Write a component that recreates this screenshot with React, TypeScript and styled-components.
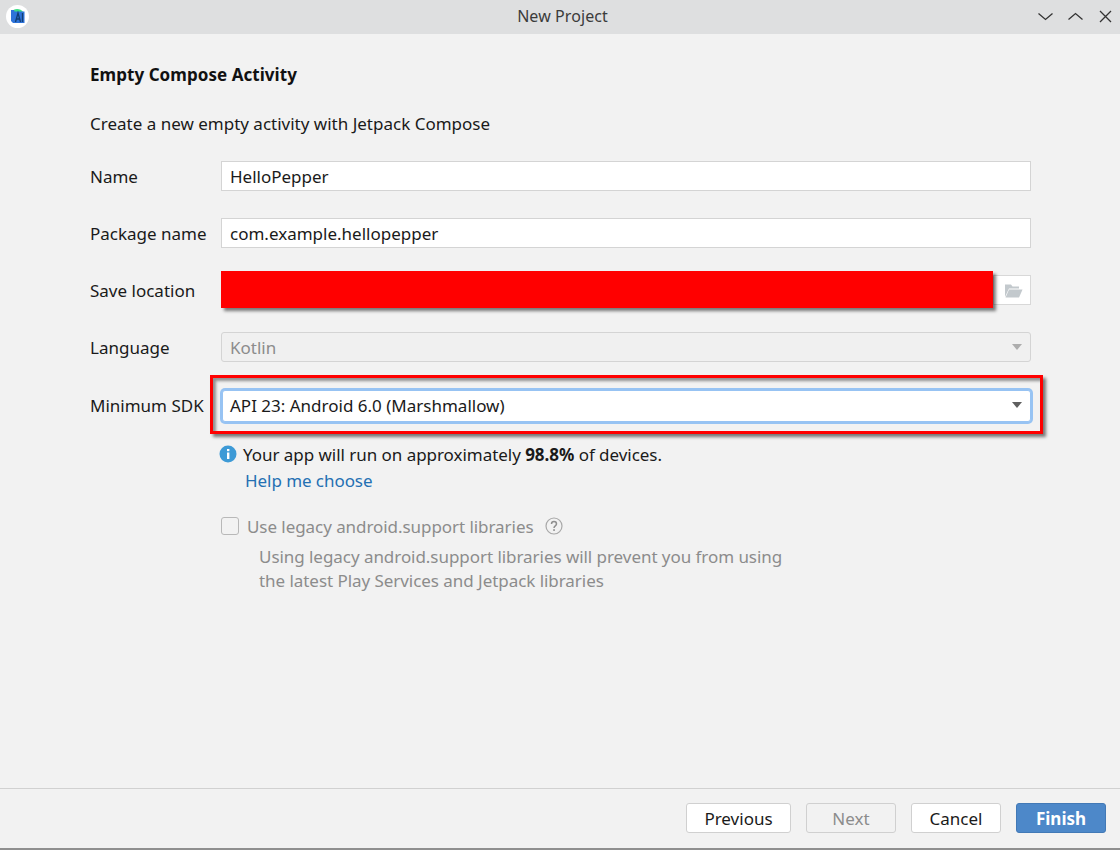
import React from "react";
import styled, { createGlobalStyle } from "styled-components";

const Global = createGlobalStyle`
  html, body { margin: 0; padding: 0; background: #f2f2f2; }
  body { font-family: "Noto Sans", "Open Sans", sans-serif; font-size: 17px; color: #1a1a1a; }
`;
const Window = styled.div`
  width: 1120px; height: 850px; display: flex; flex-direction: column; background: #f2f2f2; overflow: hidden; position: relative;
`;
const TitleBar = styled.header`
  height: 34px; flex: none; background: #dedfe0; display: grid; grid-template-columns: 1fr auto 1fr; align-items: center; padding: 0 7px 0 6px; box-sizing: border-box;
`;
const Logo = styled.div`
  width: 23px; height: 23px; border-radius: 50%; background: #fff; display: flex; align-items: center; justify-content: center; margin-bottom: 2px;
`;
const WindowTitle = styled.div`
  font-size: 16px; letter-spacing: 0.08px; color: #3b3b3b; line-height: 32px; height: 34px; text-align: center; padding-left: 6px;
`;
const WindowControls = styled.div`
  display: flex; justify-content: flex-end; gap: 15px; align-items: center; margin-bottom: 1px;
`;
const Main = styled.main`
  flex: 1; padding: 29px 89px 0 90px; display: flex; flex-direction: column; position: relative;
`;
const Heading = styled.h1`
  margin: 0; font-size: 17px; font-weight: 700; letter-spacing: 0.05px; line-height: 24px; color: #111;
`;
const Intro = styled.p`
  margin: 25px 0 0; font-size: 17px; line-height: 24px; color: #1a1a1a;
`;
const Form = styled.div`
  margin-top: 25px; display: flex; flex-direction: column; gap: 27px;
`;
const Row = styled.div`
  display: grid; grid-template-columns: 131px 1fr; align-items: center; height: 30px;
`;
const Label = styled.label`
  font-size: 17px; color: #1a1a1a;
`;
const FocusRow = styled(Row)`
  margin-top: 1px;
  ${Label} { padding-bottom: 2px; }
`;
const TextInput = styled.div`
  height: 30px; box-sizing: border-box; background: #fff; border: 1px solid #d4d4d4; padding: 0 8px; display: flex; align-items: center; font-size: 17px; color: #1a1a1a;
`;
const PathRow = styled.div`
  display: flex; justify-content: flex-end;
`;
const BrowseButton = styled.div`
  width: 38px; height: 30px; box-sizing: border-box; background: #fff; border: 1px solid #d8d8d8; padding-left: 2px; display: flex; align-items: center; justify-content: center;
`;
const Combo = styled.div<{ $disabled?: boolean }>`
  height: 30px; box-sizing: border-box; border: 1px solid #d4d4d4; border-radius: 3px; display: flex; align-items: center; justify-content: space-between; padding: 0 8px;
  background: ${p => (p.$disabled ? "#f0f0f0" : "#fff")};
  color: ${p => (p.$disabled ? "#8c8c8c" : "#1a1a1a")};
`;
const FocusedCombo = styled(Combo)`
  height: 32px; margin-left: 1px; padding: 0 8px 2px 7px; border: 1px solid #97c3f3; box-shadow: 0 0 0 2px #97c3f3; border-radius: 3px;
`;
const Arrow = styled.span<{ $disabled?: boolean }>`
  width: 0; height: 0; border-left: 5.5px solid transparent; border-right: 5.5px solid transparent;
  border-top: 6px solid ${p => (p.$disabled ? "#adadad" : "#5f5f5f")};
`;
const Hint = styled.div`
  margin: 22px 0 0 129px; display: flex; align-items: center; gap: 6px; height: 24px; font-size: 17px; letter-spacing: -0.04px; color: #1a1a1a;
`;
const HelpLink = styled.a`
  margin: 3px 0 0 155px; line-height: 24px; color: #2470b3; font-size: 17px; letter-spacing: -0.06px;
`;
const LegacyRow = styled.div`
  margin: 21px 0 0 131px; height: 24px; display: flex; align-items: center; color: #8c8c8c; letter-spacing: -0.06px;
`;
const CheckBox = styled.span`
  width: 16px; height: 16px; border: 1px solid #b8b8b8; border-radius: 3px; background: #f2f2f2; margin-right: 8px; flex: none;
`;
const HelpIcon = styled.span`
  margin-left: 11px; display: flex;
`;
const Explain = styled.p`
  margin: 7px 0 0 169px; font-size: 17px; line-height: 24px; color: #8c8c8c; letter-spacing: -0.05px;
`;
const Footer = styled.footer`
  height: 59px; flex: none; margin-bottom: 3px; border-top: 1px solid #d1d1d1; display: flex; justify-content: flex-end; align-items: flex-start; gap: 15px; padding: 14px 14px 0 0; box-sizing: border-box;
`;
const Button = styled.button<{ $width: number; $kind?: "primary" | "disabled" }>`
  width: ${p => p.$width}px; height: 30px; box-sizing: border-box; padding: 0; border-radius: 3px; font: inherit; font-size: 17px;
  font-weight: ${p => (p.$kind === "primary" ? 700 : 400)};
  background: ${p => (p.$kind === "primary" ? "#4d88c9" : p.$kind === "disabled" ? "#f2f2f2" : "#fff")};
  color: ${p => (p.$kind === "primary" ? "#fff" : p.$kind === "disabled" ? "#8c8c8c" : "#1a1a1a")};
  border: 1px solid ${p => (p.$kind === "primary" ? "#4279b6" : "#d0d0d0")};
`;
const BottomEdge = styled.div`
  height: 2px; background: #8f8f8f; position: absolute; left: 0; right: 0; bottom: 0;
`;
const RedBlock = styled.div`
  position: absolute; left: 221px; top: 271px; width: 772px; height: 37px; background: #ff0000; box-shadow: 3px 3px 3px rgba(0,0,0,.5);
`;
const RedFrame = styled.div`
  position: absolute; left: 210px; top: 375px; width: 833px; height: 59px; box-sizing: border-box; border: 3px solid #ff0000; box-shadow: 3px 3px 3px rgba(0,0,0,.5), inset 3px 3px 3px rgba(0,0,0,.4);
`;

export default function App() {
  return (
    <Window>
      <Global />
      <TitleBar>
        <Logo>
          <svg width="16" height="16" viewBox="0 0 16 16">
            <path d="M2 4 C3 0 11 0 13 4 Z" fill="#3ddc84" />
            <path d="M1 2 H4 L4.5 3.5 H14.5 V15 H3 L1 13 Z" fill="#2e73d9" />
            <path d="M5.5 14 L8 5 L10.5 14 M6.5 11 H9.5" stroke="#123e73" strokeWidth="1.3" fill="none" />
            <path d="M12.5 5 V14" stroke="#123e73" strokeWidth="1.3" />
          </svg>
        </Logo>
        <WindowTitle>New Project</WindowTitle>
        <WindowControls>
          <svg width="15" height="15" viewBox="0 0 15 15" fill="none" stroke="#333" strokeWidth="1.3"><path d="M0.5 4.5 L7.5 10.5 L14.5 4.5" /></svg>
          <svg width="15" height="15" viewBox="0 0 15 15" fill="none" stroke="#333" strokeWidth="1.3"><path d="M0.5 10.5 L7.5 4.5 L14.5 10.5" /></svg>
          <svg width="15" height="15" viewBox="0 0 15 15" fill="none" stroke="#333" strokeWidth="1.3"><path d="M2 2 L13 13 M13 2 L2 13" /></svg>
        </WindowControls>
      </TitleBar>
      <Main>
        <Heading>Empty Compose Activity</Heading>
        <Intro>Create a new empty activity with Jetpack Compose</Intro>
        <Form>
          <Row><Label>Name</Label><TextInput>HelloPepper</TextInput></Row>
          <Row><Label>Package name</Label><TextInput>com.example.hellopepper</TextInput></Row>
          <Row>
            <Label>Save location</Label>
            <PathRow>
              <BrowseButton>
                <svg width="19" height="15" viewBox="0 0 19 15">
                  <path d="M1 14 V1.5 H7 L8.5 3.5 H15 V5.5 H5 Z" fill="#c3c9cd" />
                  <path d="M1.5 14.5 L5 6.5 H18.5 L15 14.5 Z" fill="#c3c9cd" />
                </svg>
              </BrowseButton>
            </PathRow>
          </Row>
          <Row><Label>Language</Label><Combo $disabled>Kotlin<Arrow $disabled /></Combo></Row>
          <FocusRow><Label>Minimum SDK</Label><FocusedCombo>API 23: Android 6.0 (Marshmallow)<Arrow /></FocusedCombo></FocusRow>
        </Form>
        <Hint>
          <svg width="18" height="18" viewBox="0 0 18 18">
            <circle cx="9" cy="9" r="8.5" fill="#3d9ad6" />
            <rect x="8" y="7.5" width="2.4" height="6.5" fill="#fff" />
            <rect x="8" y="4" width="2.4" height="2.2" fill="#fff" />
          </svg>
          <span>Your app will run on approximately <b>98.8%</b> of devices.</span>
        </Hint>
        <HelpLink>Help me choose</HelpLink>
        <LegacyRow>
          <CheckBox />
          Use legacy android.support libraries
          <HelpIcon>
            <svg width="18" height="18" viewBox="0 0 18 18" fill="none">
              <circle cx="9" cy="9" r="8" stroke="#a8a8a8" strokeWidth="1.2" />
              <path d="M6.5 7 C6.5 3.8 11.5 3.8 11.5 7 C11.5 9 9 8.8 9 11" stroke="#8f8f8f" strokeWidth="1.5" />
              <rect x="8.2" y="12.2" width="1.7" height="1.7" fill="#8f8f8f" />
            </svg>
          </HelpIcon>
        </LegacyRow>
        <Explain>Using legacy android.support libraries will prevent you from using<br />the latest Play Services and Jetpack libraries</Explain>
      </Main>
      <Footer>
        <Button $width={105}>Previous</Button>
        <Button $width={90} $kind="disabled">Next</Button>
        <Button $width={90}>Cancel</Button>
        <Button $width={90} $kind="primary">Finish</Button>
      </Footer>
      <BottomEdge />
      <RedBlock />
      <RedFrame />
    </Window>
  );
}
